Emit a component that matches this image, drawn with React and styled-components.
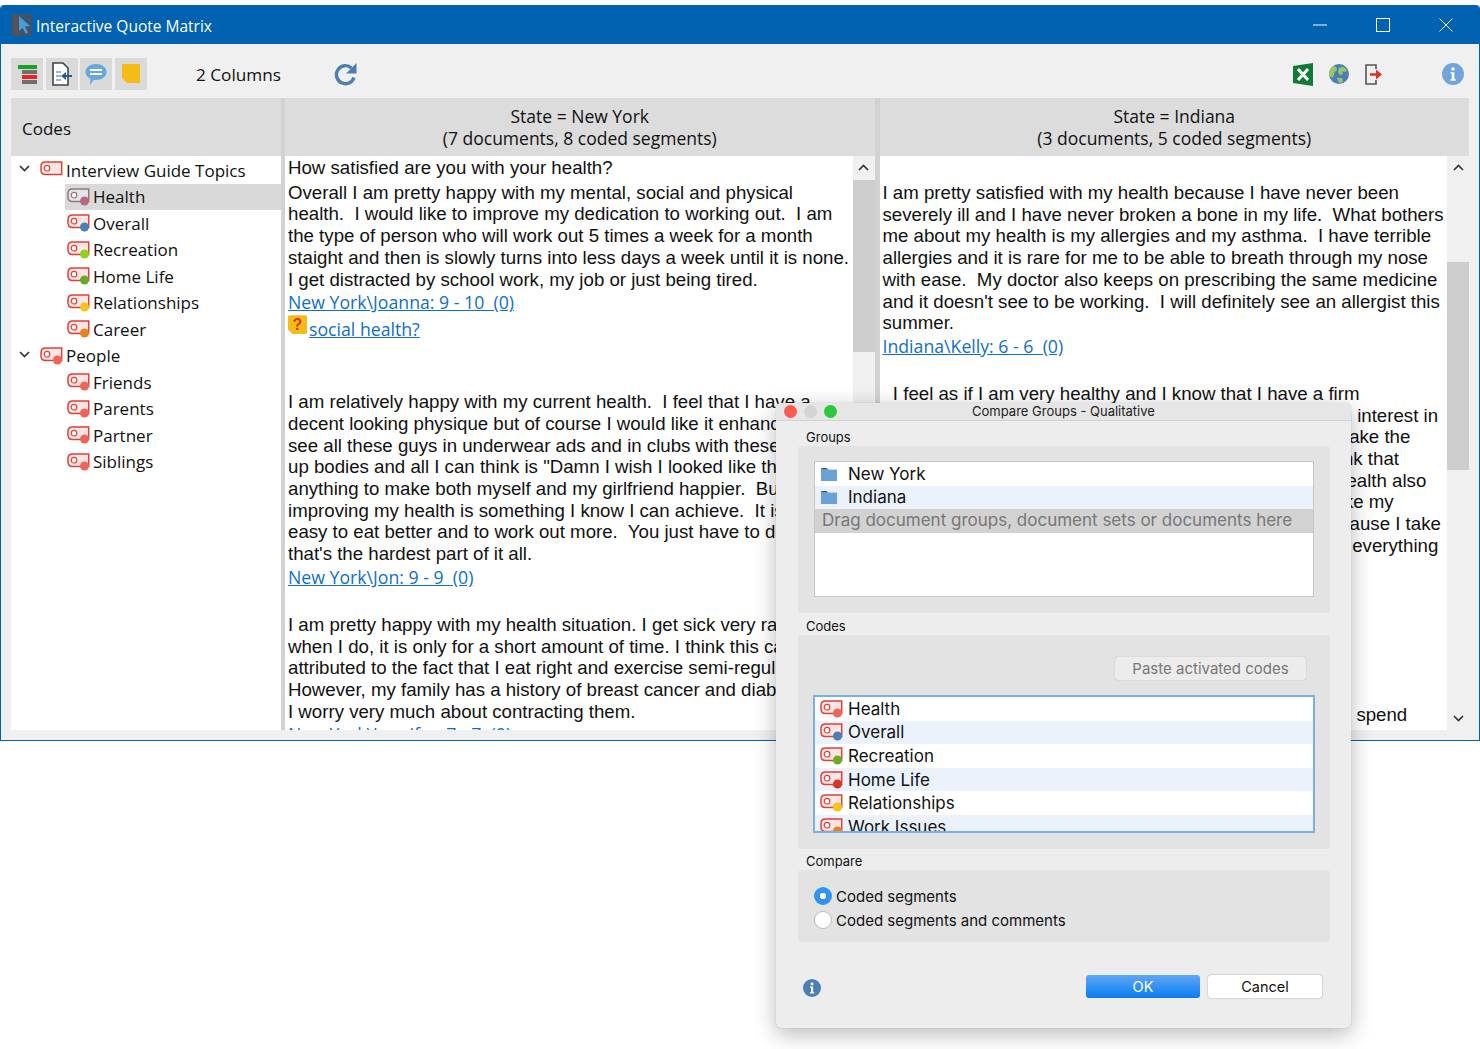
import React from "react";
import styled, { createGlobalStyle } from "styled-components";

const GlobalStyle = createGlobalStyle`
  html, body {
    margin: 0;
    padding: 0;
    background: #fff;
  }
  body {
    font-family: "Open Sans", "Noto Sans", sans-serif;
    color: #111;
  }
`;

const treeRows = [
  { label: "Interview Guide Topics", level: 0, open: true },
  { label: "Health", level: 1, dot: "#b9697f", selected: true },
  { label: "Overall", level: 1, dot: "#4a7fb5" },
  { label: "Recreation", level: 1, dot: "#8fd31f" },
  { label: "Home Life", level: 1, dot: "#6aa82a" },
  { label: "Relationships", level: 1, dot: "#f5c31c" },
  { label: "Career", level: 1, dot: "#e8821e" },
  { label: "People", level: 0, open: true, dot: "#f0635a" },
  { label: "Friends", level: 1, dot: "#f0635a" },
  { label: "Parents", level: 1, dot: "#f0635a" },
  { label: "Partner", level: 1, dot: "#f0635a" },
  { label: "Siblings", level: 1, dot: "#f0635a" },
];

const dialogCodes = [
  { label: "Health", dot: "#f0635a" },
  { label: "Overall", dot: "#4a7fb5" },
  { label: "Recreation", dot: "#6aad22" },
  { label: "Home Life", dot: "#d9342b" },
  { label: "Relationships", dot: "#f5c31c" },
  { label: "Work Issues", dot: "#e8821e" },
];

const firstQuote = [
  "Overall I am pretty happy with my mental, social and physical",
  "health.  I would like to improve my dedication to working out.  I am",
  "the type of person who will work out 5 times a week for a month",
  "staight and then is slowly turns into less days a week until it is none.",
  "I get distracted by school work, my job or just being tired.",
];

const secondQuote = [
  "I am relatively happy with my current health.  I feel that I have a",
  "decent looking physique but of course I would like it enhanced.  I",
  "see all these guys in underwear ads and in clubs with these built",
  'up bodies and all I can think is "Damn I wish I looked like that."',
  "anything to make both myself and my girlfriend happier.  But",
  "improving my health is something I know I can achieve.  It is",
  "easy to eat better and to work out more.  You just have to do it and",
  "that's the hardest part of it all.",
];

const thirdQuote = [
  "I am pretty happy with my health situation. I get sick very rarely and",
  "when I do, it is only for a short amount of time. I think this can be",
  "attributed to the fact that I eat right and exercise semi-regularly.",
  "However, my family has a history of breast cancer and diabetes and",
  "I worry very much about contracting them.",
];

const kellyQuote = [
  "I am pretty satisfied with my health because I have never been",
  "severely ill and I have never broken a bone in my life.  What bothers",
  "me about my health is my allergies and my asthma.  I have terrible",
  "allergies and it is rare for me to be able to breath through my nose",
  "with ease.  My doctor also keeps on prescribing the same medicine",
  "and it doesn't see to be working.  I will definitely see an allergist this",
  "summer.",
];

const firmQuote = [
  "  I feel as if I am very healthy and I know that I have a firm",
  "understanding  of  what it takes to stay healthy. I have an interest in",
  "nutrition and exercise and I try to make sure that I do     take the",
  "right steps to keep myself in good shape.   I really do think that",
  "I am lucky in that regard as my family's history of good health also",
  "plays a big part in it.  I am also always sure to daily     take my",
  "vitamins and I don't get sick nearly as often as most  because I take",
  "good care of myself.  I would say that I am     happy with everything",
];

const CodeIcon = ({ dot, muted }) => (
  <svg width="23" height="18" viewBox="0 0 23 18">
    <path
      d="M21.700 1H5.500C2.800 1 1 2.800 1 5.500v3.500C1 11.700 2.800 13.500 5.500 13.500h16.200z"
      fill={muted ? "#dfe6f2" : "#fbe6e4"}
      stroke={muted ? "#9a7570" : "#dc4238"}
      strokeWidth="1.500"
    />
    <circle cx="7" cy="7.200" r="2.800" fill="#fff" stroke={muted ? "#9a7570" : "#dc4238"} strokeWidth="1.200" />
    {dot && <circle cx="17.500" cy="13" r="4.500" fill={dot} />}
  </svg>
);

const FolderIcon = () => (
  <svg width="18" height="16" viewBox="0 0 18 16">
    <path d="M1 3.5C1 2.4 1.6 2 2.5 2h4.2l1.6 1.8H1z" fill="#1f5e96" />
    <rect x="1" y="3.6" width="16" height="11.4" fill="#6aa2d6" />
  </svg>
);

const InfoIcon = ({ size, color }) => (
  <svg width={size} height={size} viewBox="0 0 22 22">
    <circle cx="11" cy="11" r="11" fill={color} />
    <circle cx="11" cy="6" r="1.8" fill="#fff" />
    <path d="M8.6 9.2h3.8v7h1.4v1.6H8.4v-1.6h1.4v-5.4H8.6z" fill="#fff" />
  </svg>
);

const AppIcon = () => (
  <svg width="20" height="22" viewBox="0 0 20 22">
    <rect width="20" height="22" fill="#3f5468" />
    <rect x="1" y="1" width="5" height="20" fill="#59534f" />
    <path d="M7 2l11 10-5 .6 3 6-2.4 1.2-3-6L7 17z" fill="#4c9bd8" />
  </svg>
);

const BarsIcon = () => (
  <svg width="19" height="21" viewBox="0 0 19 21">
    <rect y="1" width="19" height="4" fill="#15a324" />
    <rect x="4" y="6" width="15" height="4" fill="#6e6e6e" />
    <rect x="4" y="11" width="15" height="4" fill="#ee2127" />
    <rect x="4" y="16" width="15" height="4" fill="#6e6e6e" />
  </svg>
);

const ImportIcon = () => (
  <svg width="20" height="24" viewBox="0 0 20 24">
    <path d="M1 1h10l5 5v17H1z" fill="#fff" stroke="#444" strokeWidth="1.6" />
    <path d="M4 10h5M4 14h5M4 18h5" stroke="#6aa2d6" strokeWidth="1.4" />
    <path d="M20 14H11" stroke="#1f5e96" strokeWidth="2" />
    <path d="M14 10l-5 4 5 4z" fill="#1f5e96" />
  </svg>
);

const BubbleIcon = () => (
  <svg width="22" height="23" viewBox="0 0 22 23">
    <path
      d="M11 1c6 0 10.500 3.500 10.500 8S17 17 11 17c-.8 0-1.500 0-2.200-.2L5 22l.4-6.300C2.500 14.200.5 12 .5 9 .5 4.500 5 1 11 1z"
      fill="#66a8df"
    />
    <path d="M5 7h12M5 11h12" stroke="#fff" strokeWidth="1.8" />
  </svg>
);

const NoteIcon = () => (
  <svg width="20" height="20" viewBox="0 0 20 20">
    <path d="M1 0h18v19H6l-5-5z" fill="#f5bc17" />
  </svg>
);

const RefreshIcon = () => (
  <svg width="24" height="24" viewBox="0 0 24 24">
    <path
      d="M20 15.500A9 9 0 1 1 17.500 6"
      fill="none"
      stroke="#4a7fb5"
      strokeWidth="3.400"
    />
    <path d="M22.500 1v10.500H12z" fill="#4a7fb5" />
  </svg>
);

const ExcelIcon = () => (
  <svg width="20" height="23" viewBox="0 0 20 23">
    <path d="M0 3l20-3v23L0 20z" fill="#0f7a35" />
    <path d="M5 6l10 11M15 6L5 17" stroke="#fff" strokeWidth="3" />
  </svg>
);

const GlobeIcon = () => (
  <svg width="20" height="20" viewBox="0 0 20 20">
    <circle cx="10" cy="10" r="10" fill="#4a7fb5" />
    <path d="M3 3c3-2 5 0 5 2s-3 2-3 5-2 4-4 3-1-8 2-10z" fill="#9cc56a" />
    <path d="M10 4c3-2 7-1 8 3l-3 1-2-1 1 3-3 1-2-3z" fill="#9cc56a" />
    <path d="M8 14l5 0 1 4-4 1z" fill="#9cc56a" />
  </svg>
);

const ExitIcon = () => (
  <svg width="18" height="21" viewBox="0 0 18 21">
    <path d="M11 5V1H1v19h10v-4" fill="none" stroke="#555" strokeWidth="1.600" />
    <path d="M5 9.200h6V5.500l6 5-6 5v-3.700H5z" fill="#d9342b" />
  </svg>
);

const Chevron = ({ up }) => (
  <svg width="11" height="7" viewBox="0 0 11 7">
    <path
      d={up ? "M1 6l4.500-4.500L10 6" : "M1 1l4.500 4.500L10 1"}
      fill="none"
      stroke="#333"
      strokeWidth="1.700"
    />
  </svg>
);

const App = () => (
  <Page>
    <GlobalStyle />
    <Window>
      <TitleBar>
        <AppIcon />
        <TitleText>Interactive Quote Matrix</TitleText>
        <WindowControls>
          <svg width="14" height="14" viewBox="0 0 14 14">
            <path d="M0 7h14" stroke="#fff" strokeWidth="1" />
          </svg>
          <svg width="14" height="14" viewBox="0 0 14 14">
            <rect x=".5" y=".5" width="13" height="13" fill="none" stroke="#fff" />
          </svg>
          <svg width="14" height="14" viewBox="0 0 14 14">
            <path d="M.5.500l13 13M13.500.500l-13 13" stroke="#fff" strokeWidth="1" />
          </svg>
        </WindowControls>
      </TitleBar>
      <Toolbar>
        <ToolGroup>
          <ToolButton><BarsIcon /></ToolButton>
          <ToolButton><ImportIcon /></ToolButton>
          <ToolButton><BubbleIcon /></ToolButton>
          <ToolButton><NoteIcon /></ToolButton>
        </ToolGroup>
        <ColumnsLabel>2 Columns</ColumnsLabel>
        <RefreshSlot><RefreshIcon /></RefreshSlot>
        <ToolRight>
          <ExcelIcon />
          <GlobeIcon />
          <ExitIcon />
          <InfoSlot><InfoIcon size={22} color="#6fa5d8" /></InfoSlot>
        </ToolRight>
      </Toolbar>
      <Matrix>
        <CodesColumn>
          <CodesHeader>Codes</CodesHeader>
          <Tree>
            {treeRows.map((row) => (
              <TreeRow key={row.label} $level={row.level} $selected={row.selected}>
                {row.open && (
                  <ChevronSlot><Chevron /></ChevronSlot>
                )}
                <CodeIcon dot={row.dot} muted={row.selected} />
                <TreeLabel>{row.label}</TreeLabel>
              </TreeRow>
            ))}
          </Tree>
        </CodesColumn>
        <Splitter />
        <QuoteColumn>
          <ColumnHeader>
            <div>State = New York</div>
            <div>(7 documents, 8 coded segments)</div>
          </ColumnHeader>
          <Pane>
            <PaneText>
              <Line>How satisfied are you with your health?</Line>
              <Quote $top={3}>
                {firstQuote.map((l) => <Line key={l}>{l}</Line>)}
              </Quote>
              <LinkRow><a href="#joanna">New York\Joanna: 9 - 10  (0)</a></LinkRow>
              <MemoRow>
                <MemoTag>?</MemoTag>
                <a href="#memo">social health?</a>
              </MemoRow>
              <Quote $top={47}>
                {secondQuote.map((l) => <Line key={l}>{l}</Line>)}
              </Quote>
              <LinkRow><a href="#jon">New York\Jon: 9 - 9  (0)</a></LinkRow>
              <Quote $top={25}>
                {thirdQuote.map((l) => <Line key={l}>{l}</Line>)}
              </Quote>
              <LinkRow><a href="#jennifer">New York\Jennifer: 7 - 7  (0)</a></LinkRow>
            </PaneText>
            <ScrollBar>
              <ScrollEnd><Chevron up /></ScrollEnd>
              <Thumb $top={1} $height={172} />
              <ScrollEnd $bottom><Chevron /></ScrollEnd>
            </ScrollBar>
          </Pane>
        </QuoteColumn>
        <Splitter $wide />
        <QuoteColumn>
          <ColumnHeader>
            <div>State = Indiana</div>
            <div>(3 documents, 5 coded segments)</div>
          </ColumnHeader>
          <Pane>
            <PaneText>
              <Quote $top={25}>
                {kellyQuote.map((l) => <Line key={l}>{l}</Line>)}
              </Quote>
              <LinkRow><a href="#kelly">Indiana\Kelly: 6 - 6  (0)</a></LinkRow>
              <Quote $top={25}>
                {firmQuote.map((l) => <Line key={l}>{l}</Line>)}
              </Quote>
              <Quote $top={147}>
                <Line>I also think that it is important that I have the free time  to spend</Line>
              </Quote>
            </PaneText>
            <ScrollBar>
              <ScrollEnd><Chevron up /></ScrollEnd>
              <Thumb $top={83} $height={208} />
              <ScrollEnd $bottom><Chevron /></ScrollEnd>
            </ScrollBar>
          </Pane>
        </QuoteColumn>
      </Matrix>
      <StatusStrip />
    </Window>

    <Dialog>
      <DialogTitle>
        <Light $color="#fc5b52" />
        <Light $color="#d4d4d4" />
        <Light $color="#2ac83f" />
        <DialogTitleText>Compare Groups - Qualitative</DialogTitleText>
      </DialogTitle>
      <DialogBody>
        <SectionLabel>Groups</SectionLabel>
        <Panel $height={167} $padTop={15}>
          <GroupList>
            <ListRow $gap={10}><FolderIcon /><span>New York</span></ListRow>
            <ListRow $gap={10} $alt><FolderIcon /><span>Indiana</span></ListRow>
            <DropRow>Drag document groups, document sets or documents here</DropRow>
          </GroupList>
        </Panel>
        <SectionLabel $top={5}>Codes</SectionLabel>
        <Panel $height={214} $padTop={22}>
          <PasteRow><PasteButton>Paste activated codes</PasteButton></PasteRow>
          <CodeList>
            {dialogCodes.map((code, index) => (
              <ListRow key={code.label} $gap={5} $alt={index % 2 === 1}>
                <CodeIcon dot={code.dot} />
                <span>{code.label}</span>
              </ListRow>
            ))}
          </CodeList>
        </Panel>
        <SectionLabel $top={4}>Compare</SectionLabel>
        <Panel $height={72} $padTop={14}>
          <RadioRow><Radio $on /><span>Coded segments</span></RadioRow>
          <RadioRow><Radio /><span>Coded segments and comments</span></RadioRow>
        </Panel>
        <DialogFooter>
          <FooterInfo><InfoIcon size={18} color="#4a7fb5" /></FooterInfo>
          <FooterButtons>
            <OkButton>OK</OkButton>
            <CancelButton>Cancel</CancelButton>
          </FooterButtons>
        </DialogFooter>
      </DialogBody>
    </Dialog>
  </Page>
);

export default App;

const Page = styled.div`
  position: relative;
  width: 1480px;
  height: 1049px;
  padding-top: 5px;
  box-sizing: border-box;
  overflow: hidden;
`;

const Window = styled.div`
  margin: 0 0 0 1px;
  width: 1478px;
  height: 735px;
  background: #f0f0f0;
  border-radius: 4px 4px 0 0;
  border-bottom: 1px solid #0062b1;
  box-shadow: -1px 0 0 #0062b1, 1px 0 0 #0062b1;
  display: flex;
  flex-direction: column;
`;

const TitleBar = styled.div`
  height: 39px;
  background: #0062b1;
  border-radius: 4px 4px 0 0;
  display: flex;
  align-items: center;
  padding: 0 0 0 11px;
  flex: none;
`;

const TitleText = styled.div`
  color: #fff;
  font-size: 15.5px;
  margin-left: 4px;
  padding-top: 2px;
`;

const WindowControls = styled.div`
  margin-left: auto;
  display: flex;
  gap: 49px;
  padding-right: 26px;
`;

const Toolbar = styled.div`
  height: 54px;
  box-sizing: border-box;
  padding: 6px 15px 0 10px;
  display: flex;
  align-items: center;
  flex: none;
`;

const ToolGroup = styled.div`
  display: flex;
  gap: 2.67px;
`;

const ToolButton = styled.div`
  width: 32px;
  height: 32px;
  background: #dadada;
  display: flex;
  align-items: center;
  justify-content: center;
`;

const ColumnsLabel = styled.div`
  margin-left: 49px;
  font-size: 17.2px;
`;

const RefreshSlot = styled.div`
  margin-left: 53px;
  display: flex;
`;

const ToolRight = styled.div`
  margin-left: auto;
  display: flex;
  align-items: center;
  gap: 16px;
`;

const InfoSlot = styled.div`
  margin-left: 43px;
  display: flex;
`;

const Matrix = styled.div`
  display: flex;
  padding: 0 10px;
  height: 632px;
  flex: none;
`;

const CodesColumn = styled.div`
  width: 270px;
  flex: none;
  display: flex;
  flex-direction: column;
`;

const CodesHeader = styled.div`
  height: 58px;
  box-sizing: border-box;
  background: #dcdcdc;
  display: flex;
  align-items: center;
  padding: 2px 0 0 11px;
  font-size: 17px;
  flex: none;
`;

const Tree = styled.div`
  background: #fff;
  flex: 1;
  overflow: hidden;
  padding-top: 1px;
`;

const TreeRow = styled.div`
  position: relative;
  height: 26.5px;
  display: flex;
  align-items: center;
  gap: 3px;
  margin-left: ${(p) => (p.$level === 1 ? "54px" : "0")};
  padding-left: ${(p) => (p.$level === 1 ? "2px" : "29px")};
  background: ${(p) => (p.$selected ? "#d9d9d9" : "transparent")};
`;

const ChevronSlot = styled.span`
  position: absolute;
  left: 8px;
  top: 8px;
  display: flex;
`;

const TreeLabel = styled.span`
  font-size: 17px;
`;

const Splitter = styled.div`
  width: ${(p) => (p.$wide ? "5px" : "4px")};
  flex: none;
  background: #d2d2d2;
`;

const QuoteColumn = styled.div`
  flex: 1;
  min-width: 0;
  display: flex;
  flex-direction: column;
`;

const ColumnHeader = styled.div`
  height: 58px;
  background: #dcdcdc;
  font-size: 17.5px;
  line-height: 22px;
  text-align: center;
  display: flex;
  flex-direction: column;
  justify-content: center;
  flex: none;
`;

const Pane = styled.div`
  flex: 1;
  min-height: 0;
  display: flex;
  background: #fff;
`;

const PaneText = styled.div`
  flex: 1;
  min-width: 0;
  overflow: hidden;
  padding: 1px 0 0 3px;
`;

const Quote = styled.div`
  margin-top: ${(p) => p.$top || 0}px;
`;

const Line = styled.div`
  font-family: "Liberation Sans", Arial, sans-serif;
  font-size: 18.66px;
  line-height: 21.7px;
  white-space: pre;
  color: #111;
`;

const LinkRow = styled.div`
  height: 24px;
  line-height: 24px;
  font-size: 17.7px;
  white-space: pre;

  a {
    color: #0f6fc6;
    text-decoration: underline;
  }
`;

const MemoRow = styled(LinkRow)`
  height: 30px;
  display: flex;
  align-items: center;

  a {
    margin-left: 2px;
  }
`;

const MemoTag = styled.span`
  width: 19px;
  height: 19px;
  background: #f5bc17;
  color: #d9342b;
  font-family: "Liberation Sans", Arial, sans-serif;
  font-weight: 700;
  font-size: 16px;
  line-height: 19px;
  text-align: center;
  margin-top: -9px;
  border-radius: 2px;
  clip-path: polygon(0 0, 100% 0, 100% 100%, 25% 100%, 0 75%);
`;

const ScrollBar = styled.div`
  position: relative;
  width: 22px;
  flex: none;
  background: #f0f0f0;
  padding-top: 23px;
  box-sizing: border-box;
`;

const ScrollEnd = styled.div`
  position: absolute;
  left: 0;
  width: 100%;
  height: 23px;
  display: flex;
  align-items: center;
  justify-content: center;
  ${(p) => (p.$bottom ? "bottom: 0;" : "top: 0;")}
`;

const Thumb = styled.div`
  margin-top: ${(p) => p.$top}px;
  height: ${(p) => p.$height}px;
  background: #cdcdcd;
`;

const StatusStrip = styled.div`
  flex: 1;
`;

const Dialog = styled.div`
  position: absolute;
  left: 776px;
  top: 403px;
  width: 575px;
  height: 625px;
  background: #ededed;
  border-radius: 5px;
  box-shadow: 0 6px 22px rgba(0, 0, 0, 0.28), 0 0 1px rgba(0, 0, 0, 0.3);
  display: flex;
  flex-direction: column;
  font-family: Inter, "Liberation Sans", sans-serif;
`;

const DialogTitle = styled.div`
  position: relative;
  height: 17px;
  display: flex;
  align-items: center;
  gap: 7px;
  padding-left: 8px;
  background: #e6e6e6;
  border-bottom: 1px solid #d2d2d2;
  border-radius: 5px 5px 0 0;
  flex: none;
`;

const Light = styled.span`
  width: 13px;
  height: 13px;
  border-radius: 50%;
  background: ${(p) => p.$color};
`;

const DialogTitleText = styled.div`
  position: absolute;
  left: 0;
  right: 0;
  top: 0;
  line-height: 16px;
  text-align: center;
  font-size: 13px;
  color: #222;
`;

const DialogBody = styled.div`
  flex: 1;
  padding: 8px 21px 0 22px;
  display: flex;
  flex-direction: column;
`;

const SectionLabel = styled.div`
  font-size: 13px;
  line-height: 17px;
  padding-left: 8px;
  margin-top: ${(p) => p.$top || 0}px;
  color: #111;
`;

const Panel = styled.div`
  height: ${(p) => p.$height}px;
  box-sizing: border-box;
  padding: ${(p) => p.$padTop}px 16px 0 16px;
  background: #e3e3e3;
  border-radius: 4px;
  flex: none;
`;

const GroupList = styled.div`
  height: 136px;
  box-sizing: border-box;
  background: #fff;
  border: 1px solid #c6c6c6;
  width: 500px;
`;

const ListRow = styled.div`
  height: 23.6px;
  display: flex;
  align-items: center;
  gap: ${(p) => p.$gap}px;
  padding-left: 5px;
  font-size: 17px;
  background: ${(p) => (p.$alt ? "#ebf2fc" : "#fff")};
  color: #111;
`;

const DropRow = styled.div`
  height: 23.6px;
  line-height: 23.6px;
  padding-left: 7px;
  background: #d2d2d2;
  color: #777;
  font-size: 17px;
  white-space: nowrap;
`;

const PasteRow = styled.div`
  display: flex;
  justify-content: flex-end;
  margin-right: 8px;
`;

const PasteButton = styled.div`
  width: 191px;
  height: 23px;
  line-height: 23px;
  text-align: center;
  background: #ececec;
  border-radius: 3px;
  box-shadow: 0 0 1px rgba(0, 0, 0, 0.35);
  font-size: 15px;
  color: #777;
`;

const CodeList = styled.div`
  margin-top: 15px;
  margin-left: -1px;
  height: 138px;
  width: 502px;
  box-sizing: border-box;
  border: 2px solid #7ab0e4;
  background: #fff;
  overflow: hidden;
`;

const RadioRow = styled.div`
  height: 24px;
  display: flex;
  align-items: center;
  gap: 4px;
  font-size: 15px;
  color: #111;
`;

const Radio = styled.span`
  width: 18px;
  height: 18px;
  box-sizing: border-box;
  border-radius: 50%;
  background: ${(p) => (p.$on ? "radial-gradient(circle, #fff 0 3px, #2f95f5 3.5px)" : "#fff")};
  border: ${(p) => (p.$on ? "none" : "1px solid #bdbdbd")};
`;

const DialogFooter = styled.div`
  display: flex;
  align-items: flex-start;
  justify-content: space-between;
  margin-top: 33px;
  padding-left: 5px;
`;

const FooterInfo = styled.div`
  display: flex;
  padding-top: 4px;
`;

const FooterButtons = styled.div`
  display: flex;
  gap: 8px;
  margin-right: 8px;
`;

const OkButton = styled.div`
  width: 114px;
  height: 23px;
  line-height: 23px;
  text-align: center;
  border-radius: 3px;
  background: linear-gradient(#5fa8f5, #0a7cf0);
  color: #fff;
  font-size: 14.5px;
`;

const CancelButton = styled(OkButton)`
  background: #fff;
  color: #111;
  box-shadow: 0 0 1.500px rgba(0, 0, 0, 0.45);
`;
